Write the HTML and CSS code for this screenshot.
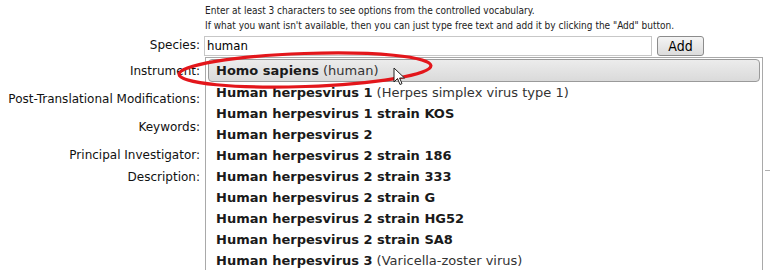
FILE: index.html
```html
<!DOCTYPE html>
<html lang="en">
<head>
    <meta charset="UTF-8">
    <title>Species</title>
    <link rel="stylesheet" href="styles.css">
</head>
<body>
    <div class="form">
        <div class="hint">
            <div>Enter at least 3 characters to see options from the controlled vocabulary.</div>
            <div>If what you want isn't available, then you can just type free text and add it by clicking the "Add" button.</div>
        </div>

        <div class="field species">
            <label>Species:</label>
            <div class="control">
                <input type="text" class="text-input" value="human">
                <button class="add-btn">Add</button>
            </div>
        </div>
        <div class="field"><label>Instrument:</label></div>
        <div class="field"><label>Post-Translational Modifications:</label></div>
        <div class="field"><label>Keywords:</label></div>
        <div class="field"><label>Principal Investigator:</label></div>
        <div class="field desc"><label>Description:</label></div>

        <ul class="suggest">
            <li class="active"><b>Homo sapiens</b> (human)</li>
            <li><b>Human herpesvirus 1</b> (Herpes simplex virus type 1)</li>
            <li><b>Human herpesvirus 1 strain KOS</b></li>
            <li><b>Human herpesvirus 2</b></li>
            <li><b>Human herpesvirus 2 strain 186</b></li>
            <li><b>Human herpesvirus 2 strain 333</b></li>
            <li><b>Human herpesvirus 2 strain G</b></li>
            <li><b>Human herpesvirus 2 strain HG52</b></li>
            <li><b>Human herpesvirus 2 strain SA8</b></li>
            <li><b>Human herpesvirus 3</b> (Varicella-zoster virus)</li>
        </ul>

        <div class="edge-tick"></div>

        <svg class="ring" width="270" height="46" viewBox="0 0 270 46">
            <ellipse cx="133" cy="23" rx="126" ry="16.5" fill="none" stroke="#e3161b" stroke-width="3.2" transform="rotate(-2 133 23)"/>
        </svg>

        <svg class="pointer" width="14" height="20" viewBox="0 0 14 20">
            <path d="M1 1 L1 15 L4.5 11.5 L7 17.5 L9 16.6 L6.6 11 L11.5 11 Z" fill="#fff" stroke="#222" stroke-width="1"/>
        </svg>
    </div>
</body>
</html>
```

FILE: styles.css
```css
body {
    margin: 0;
    background: #fff;
    font-family: 'DejaVu Sans', sans-serif;
    color: #111;
    overflow: hidden;
}

.form {
    position: relative;
    width: 770px;
    height: 270px;
}

.hint {
    padding: 3px 0 0 205px;
    font-family: 'DejaVu Sans Condensed', 'DejaVu Sans', sans-serif;
    font-size: 10px;
    line-height: 15px;
    color: #222;
}

.field {
    display: flex;
    align-items: center;
    height: 28px;
    font-size: 12px;
}

.field label {
    width: 200px;
    text-align: right;
    flex-shrink: 0;
}

.species {
    height: 22px;
    margin-top: 2px;
}

.species label {
    padding-bottom: 3px;
}

.desc {
    height: 16px;
}

.control {
    display: flex;
    align-items: center;
    margin-left: 4px;
}

.text-input {
    width: 448px;
    height: 20px;
    box-sizing: border-box;
    border: 1px solid #c7c7c7;
    padding: 0 2px 1px;
    font-family: 'DejaVu Sans Condensed', 'DejaVu Sans', sans-serif;
    font-size: 13px;
    color: #000;
    outline: none;
}

.add-btn {
    margin-left: 5px;
    width: 47px;
    height: 20px;
    border: 1px solid #8c8c8c;
    border-radius: 3px;
    background: linear-gradient(#f4f4f4, #dcdcdc);
    font-family: 'DejaVu Sans Condensed', 'DejaVu Sans', sans-serif;
    font-size: 14px;
    padding: 0;
    color: #000;
}

.suggest {
    position: absolute;
    left: 205px;
    top: 57px;
    width: 558px;
    height: 220px;
    margin: 0;
    padding: 1px 2px;
    list-style: none;
    border: 1px solid #a9a9a9;
    border-bottom: none;
    background: #fff;
    box-sizing: border-box;
    font-size: 13px;
    color: #333;
}

.suggest li {
    height: 21px;
    line-height: 21px;
    padding-left: 8px;
    white-space: nowrap;
}

.suggest li b {
    color: #1a1a1a;
}

.suggest li.active {
    height: 21px;
    line-height: 21px;
    border: 1px solid #9a9a9a;
    border-radius: 4px;
    background: linear-gradient(#ececec, #dadada);
    padding-left: 7px;
}

.edge-tick {
    position: absolute;
    left: 765px;
    top: 170px;
    width: 5px;
    height: 1px;
    background: #b0b0b0;
}

.ring {
    position: absolute;
    left: 172px;
    top: 47px;
}

.pointer {
    position: absolute;
    left: 393px;
    top: 67px;
}
```
